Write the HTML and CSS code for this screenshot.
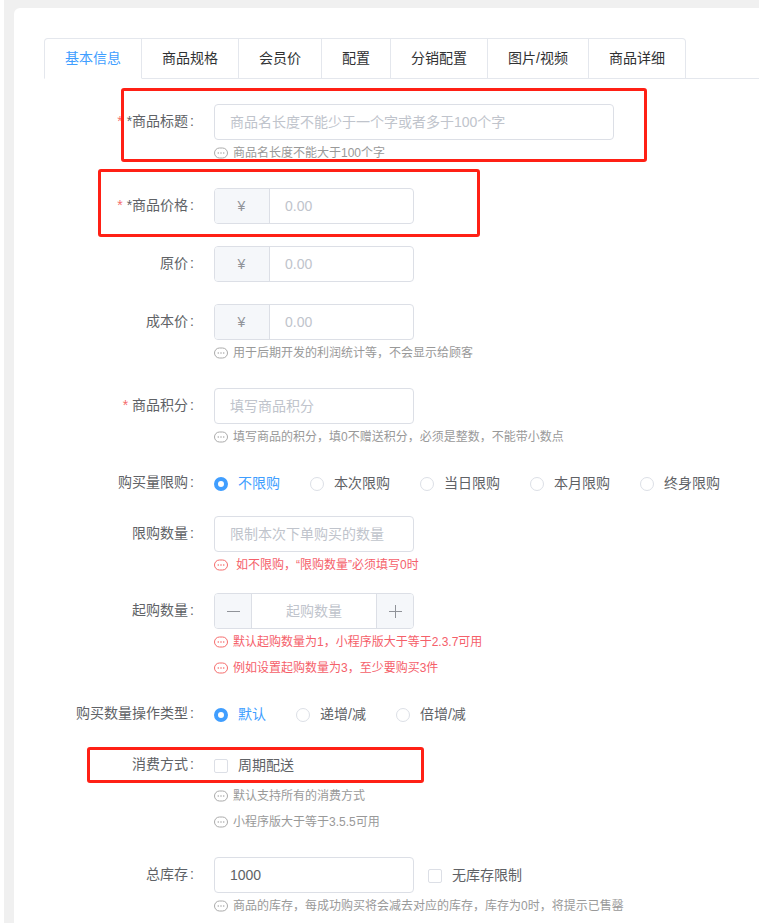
FILE: index.html
```html
<!DOCTYPE html>
<html lang="zh">
<head>
<meta charset="utf-8">
<title>商品</title>
<link rel="stylesheet" href="styles.css">
</head>
<body>
<svg class="defs" width="0" height="0"><defs><symbol id="msg" viewBox="0 0 14 12"><rect x="0.5" y="1" width="13" height="10" rx="5" fill="none" stroke="currentColor"/><circle cx="4.3" cy="6" r=".8" fill="currentColor"/><circle cx="7" cy="6" r=".8" fill="currentColor"/><circle cx="9.7" cy="6" r=".8" fill="currentColor"/></symbol></defs></svg>
<div class="shell">
<main class="card">
  <nav class="tabs">
    <a class="tab active">基本信息</a><a class="tab">商品规格</a><a class="tab">会员价</a><a class="tab">配置</a><a class="tab">分销配置</a><a class="tab">图片/视频</a><a class="tab">商品详细</a>
  </nav>
  <form class="form">
    <div class="row">
      <label class="label"><span class="req">*</span> *商品标题<i>:</i></label>
      <div class="control">
        <div class="input wide"><span class="ph">商品名长度不能少于一个字或者多于100个字</span></div>
        <p class="help"><svg class="ico"><use href="#msg"/></svg>商品名长度不能大于100个字</p>
      </div>
    </div>
    <div class="row">
      <label class="label"><span class="req">*</span> *商品价格<i>:</i></label>
      <div class="control"><div class="group"><span class="addon">¥</span><span class="ph cell">0.00</span></div></div>
    </div>
    <div class="row">
      <label class="label">原价<i>:</i></label>
      <div class="control"><div class="group"><span class="addon">¥</span><span class="ph cell">0.00</span></div></div>
    </div>
    <div class="row">
      <label class="label">成本价<i>:</i></label>
      <div class="control">
        <div class="group"><span class="addon">¥</span><span class="ph cell">0.00</span></div>
        <p class="help"><svg class="ico"><use href="#msg"/></svg>用于后期开发的利润统计等，不会显示给顾客</p>
      </div>
    </div>
    <div class="row">
      <label class="label"><span class="req">*</span> 商品积分<i>:</i></label>
      <div class="control">
        <div class="input"><span class="ph">填写商品积分</span></div>
        <p class="help"><svg class="ico"><use href="#msg"/></svg>填写商品的积分，填0不赠送积分，必须是整数，不能带小数点</p>
      </div>
    </div>
    <div class="row short">
      <label class="label">购买量限购<i>:</i></label>
      <div class="options">
        <span class="opt on"><b class="radio"></b>不限购</span>
        <span class="opt"><b class="radio"></b>本次限购</span>
        <span class="opt"><b class="radio"></b>当日限购</span>
        <span class="opt"><b class="radio"></b>本月限购</span>
        <span class="opt"><b class="radio"></b>终身限购</span>
      </div>
    </div>
    <div class="row tight">
      <label class="label">限购数量<i>:</i></label>
      <div class="control">
        <div class="input"><span class="ph">限制本次下单购买的数量</span></div>
        <p class="help warn"><svg class="ico"><use href="#msg"/></svg><span class="nudge">如不限购，“限购数量”必须填写0时</span></p>
      </div>
    </div>
    <div class="row">
      <label class="label">起购数量<i>:</i></label>
      <div class="control">
        <div class="stepper">
          <span class="step"><svg class="stepicon" viewBox="0 0 13 13"><path d="M0 6.5h13" /></svg></span>
          <span class="ph mid">起购数量</span>
          <span class="step plus"><svg class="stepicon" viewBox="0 0 13 13"><path d="M0 6.5h13M6.5 0v13" /></svg></span>
        </div>
        <p class="help warn"><svg class="ico"><use href="#msg"/></svg>默认起购数量为1，小程序版大于等于2.3.7可用</p>
        <p class="help warn"><svg class="ico"><use href="#msg"/></svg>例如设置起购数量为3，至少要购买3件</p>
      </div>
    </div>
    <div class="row short">
      <label class="label">购买数量操作类型<i>:</i></label>
      <div class="options">
        <span class="opt on"><b class="radio"></b>默认</span>
        <span class="opt"><b class="radio"></b>递增/减</span>
        <span class="opt"><b class="radio"></b>倍增/减</span>
      </div>
    </div>
    <div class="row">
      <label class="label">消费方式<i>:</i></label>
      <div class="control">
        <div class="checkline"><span class="opt"><b class="box"></b>周期配送</span></div>
        <p class="help"><svg class="ico"><use href="#msg"/></svg>默认支持所有的消费方式</p>
        <p class="help"><svg class="ico"><use href="#msg"/></svg>小程序版大于等于3.5.5可用</p>
      </div>
    </div>
    <div class="row">
      <label class="label">总库存<i>:</i></label>
      <div class="control">
        <div class="checkline"><div class="input"><span class="val">1000</span></div><span class="opt after"><b class="box"></b>无库存限制</span></div>
        <p class="help"><svg class="ico"><use href="#msg"/></svg>商品的库存，每成功购买将会减去对应的库存，库存为0时，将提示已售罄</p>
      </div>
    </div>
  </form>
  <div class="mark mark-a"></div>
  <div class="mark mark-b"></div>
  <div class="mark mark-c"></div>
</main>
</div>
</body>
</html>
```
FILE: styles.css
```css
* { box-sizing: border-box; }
html, body { margin: 0; height: 100%; overflow: hidden; background: #fff; }
body { font-family: "Liberation Sans", "Noto Sans CJK SC", sans-serif; font-size: 14px; color: #515a6e; width: 759px; height: 923px; }
.defs { position: absolute; }
.shell { margin-left: 4px; padding: 8px 0 0 10px; background: #f0f0f0; height: 923px; }
.card { position: relative; background: #fff; border-radius: 6px 0 0 0; height: 915px; padding: 30px 0 0 30px; overflow: hidden; }
.tabs { display: flex; height: 41px; border-bottom: 1px solid #e4e7ed; }
.tab { height: 41px; padding: 0 20px; line-height: 38px; color: #303133; border: 1px solid #e4e7ed; border-left: 0; background: #fff; }
.tab:first-child { border-left: 1px solid #e4e7ed; border-radius: 4px 0 0 0; }
.tab:last-child { border-radius: 0 4px 0 0; }
.tab.active { color: #409eff; border-bottom-color: #fff; }
.form { padding-top: 25px; }
.row { display: flex; margin-bottom: 22px; }
.row.tight .help:last-child { margin-bottom: -1px; }
.row.short { height: 22px; }
.row.short .label { line-height: 20px; }
.label { width: 170px; padding-right: 20px; text-align: right; line-height: 35px; color: #606266; flex: none; white-space: nowrap; }
.label i { font-style: normal; margin-left: 2px; }
.req { color: #f56c6c; }
.control { flex: none; }
.input { width: 200px; height: 36px; border: 1px solid #dcdfe6; border-radius: 4px; padding: 0 15px; line-height: 34px; background: #fff; }
.input.wide { width: 400px; }
.ph { color: #c0c4cc; }
.val { color: #606266; }
.group, .stepper { display: flex; width: 200px; height: 36px; border: 1px solid #dcdfe6; border-radius: 4px; overflow: hidden; line-height: 34px; }
.addon { width: 55px; flex: none; text-align: center; background: #f5f7fa; border-right: 1px solid #dcdfe6; color: #909399; padding-right: 1px; }
.cell { padding-left: 15px; }
.step { width: 37px; flex: none; display: flex; align-items: center; justify-content: center; background: #f5f7fa; border-right: 1px solid #dcdfe6; }
.step.plus { border-right: 0; border-left: 1px solid #dcdfe6; }
.stepicon { width: 13px; height: 13px; fill: none; stroke: #909399; stroke-width: 1; }
.mid { flex: 1; text-align: center; }
.help { display: flex; align-items: center; height: 16px; padding-top: 2px; margin: 4px 0 6px; font-size: 12px; line-height: 14px; color: #999; white-space: nowrap; }
.control .help + .help { margin-top: 10px; }
.help.warn { color: #f5606a; }
.ico { width: 14px; height: 12px; margin-right: 5px; color: #aaa; flex: none; }
.warn .ico { color: #f56c6c; }
.nudge { margin-left: 3px; }
.options { display: flex; align-items: center; height: 22px; }
.opt { display: inline-flex; align-items: center; margin-right: 30px; color: #606266; white-space: nowrap; line-height: 20px; }
.opt.on { color: #409eff; }
.radio { width: 14px; height: 14px; margin: 1px 10px 0 0; border: 1px solid #dcdfe6; border-radius: 50%; background: #fff; flex: none; }
.opt.on .radio { border: 4.5px solid #409eff; }
.box { width: 14px; height: 14px; margin: 1px 10px 0 0; border: 1px solid #dcdfe6; border-radius: 2px; flex: none; }
.checkline { display: flex; align-items: center; height: 36px; }
.opt.after { margin-left: 14px; margin-right: 0; }
.mark { position: absolute; border: 3px solid #ff2015; border-radius: 3px; pointer-events: none; }
.mark-a { left: 107px; top: 80px; width: 526px; height: 74px; }
.mark-b { left: 84px; top: 161px; width: 382px; height: 68px; }
.mark-c { left: 73px; top: 739px; width: 337px; height: 36px; }
```
